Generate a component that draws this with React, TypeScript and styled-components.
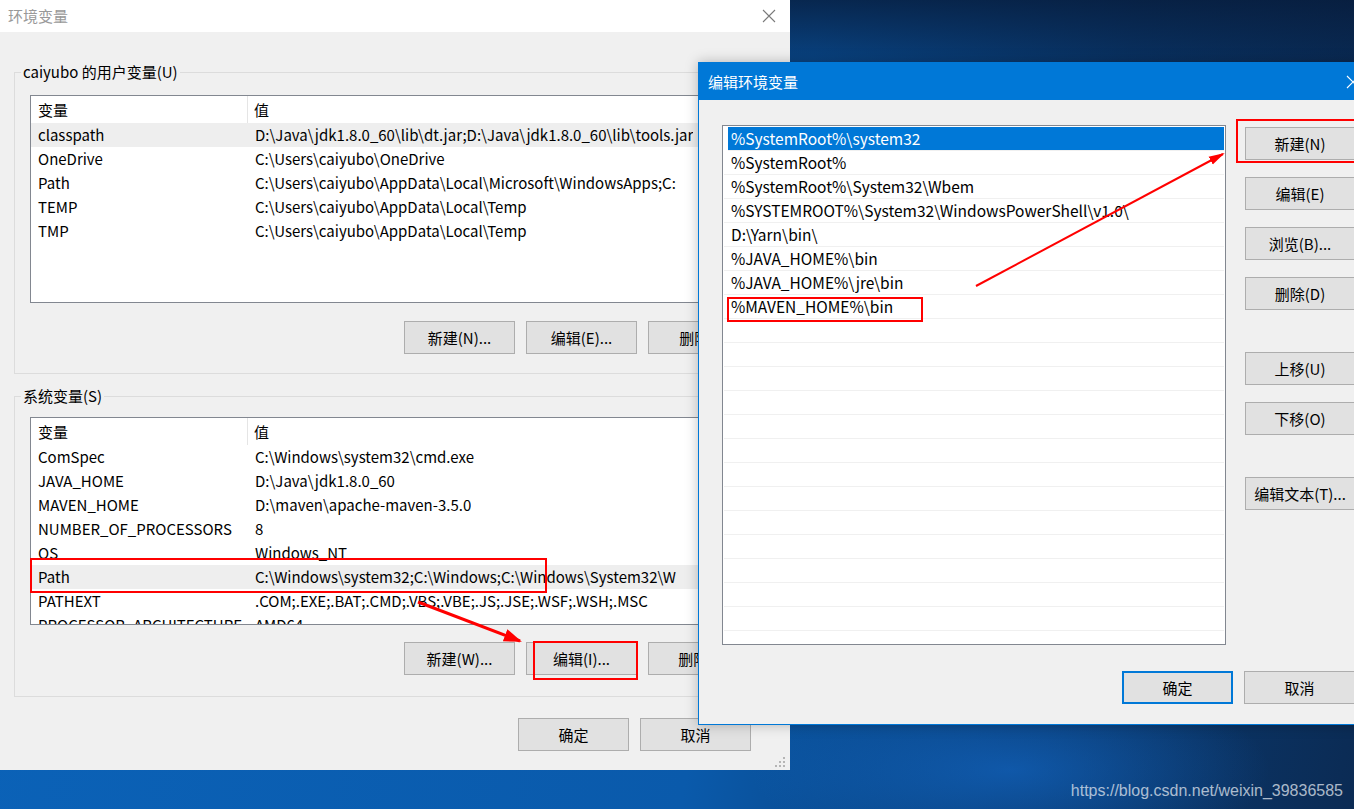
import React from 'react';
import styled, {createGlobalStyle} from 'styled-components';

const GlobalStyle = createGlobalStyle`
  html, body {
    margin: 0;
    padding: 0;
  }
  body {
    width: 1354px;
    height: 809px;
    overflow: hidden;
    font-family: "Noto Sans CJK SC", "Noto Sans", sans-serif;
    color: #000;
  }
`;

const userVars = [
  ['classpath', String.raw`D:\Java\jdk1.8.0_60\lib\dt.jar;D:\Java\jdk1.8.0_60\lib\tools.jar`],
  ['OneDrive', String.raw`C:\Users\caiyubo\OneDrive`],
  ['Path', String.raw`C:\Users\caiyubo\AppData\Local\Microsoft\WindowsApps;C:`],
  ['TEMP', String.raw`C:\Users\caiyubo\AppData\Local\Temp`],
  ['TMP', String.raw`C:\Users\caiyubo\AppData\Local\Temp`],
];

const systemVars = [
  ['ComSpec', String.raw`C:\Windows\system32\cmd.exe`],
  ['JAVA_HOME', String.raw`D:\Java\jdk1.8.0_60`],
  ['MAVEN_HOME', String.raw`D:\maven\apache-maven-3.5.0`],
  ['NUMBER_OF_PROCESSORS', '8'],
  ['OS', 'Windows_NT'],
  ['Path', String.raw`C:\Windows\system32;C:\Windows;C:\Windows\System32\W`],
  ['PATHEXT', '.COM;.EXE;.BAT;.CMD;.VBS;.VBE;.JS;.JSE;.WSF;.WSH;.MSC'],
  ['PROCESSOR_ARCHITECTURE', 'AMD64'],
];

const pathItems = [
  String.raw`%SystemRoot%\system32`,
  String.raw`%SystemRoot%`,
  String.raw`%SystemRoot%\System32\Wbem`,
  String.raw`%SYSTEMROOT%\System32\WindowsPowerShell\v1.0\ `.trim(),
  String.raw`D:\Yarn\bin\ `.trim(),
  String.raw`%JAVA_HOME%\bin`,
  String.raw`%JAVA_HOME%\jre\bin`,
  String.raw`%MAVEN_HOME%\bin`,
];

const CloseIcon = ({color}: {color: string}) => (
  <svg width="14" height="14" viewBox="0 0 14 14">
    <path d="M1 1 L13 13 M13 1 L1 13" stroke={color} strokeWidth="1.1" fill="none" />
  </svg>
);

const GripIcon = () => (
  <svg width="10" height="10" viewBox="0 0 10 10">
    <rect x="8" y="0" width="2" height="2" fill="#b5b5b5" />
    <rect x="4" y="4" width="2" height="2" fill="#b5b5b5" />
    <rect x="8" y="4" width="2" height="2" fill="#b5b5b5" />
    <rect x="0" y="8" width="2" height="2" fill="#b5b5b5" />
    <rect x="4" y="8" width="2" height="2" fill="#b5b5b5" />
    <rect x="8" y="8" width="2" height="2" fill="#b5b5b5" />
  </svg>
);

export default function App() {
  const emptyRows = Array.from({length: 14});

  return (
    <>
      <GlobalStyle />
      <Desktop>
        <EnvWindow>
          <TitleBar $active={false}>
            <TitleText>环境变量</TitleText>
            <CloseBox $height={32}>
              <CloseIcon color="#7a7a7a" />
            </CloseBox>
          </TitleBar>
          <EnvBody>
            <GroupBox $top={40} $padTop={22} $listGap={18} $padBottom={19}>
              <GroupLabel>caiyubo 的用户变量(U)</GroupLabel>
              <VarList>
                <HeaderRow>
                  <HeaderName>变量</HeaderName>
                  <HeaderValue>值</HeaderValue>
                </HeaderRow>
                {userVars.map(([name, value], i) => (
                  <VarRow key={name} $selected={i === 0}>
                    <NameCell>{name}</NameCell>
                    <ValueCell>{value}</ValueCell>
                  </VarRow>
                ))}
              </VarList>
              <ButtonRow>
                <DlgButton>新建(N)...</DlgButton>
                <DlgButton>编辑(E)...</DlgButton>
                <DlgButton>删除(L)</DlgButton>
              </ButtonRow>
            </GroupBox>

            <GroupBox $top={22} $padTop={20} $listGap={17} $padBottom={21}>
              <GroupLabel>系统变量(S)</GroupLabel>
              <VarList>
                <HeaderRow>
                  <HeaderName>变量</HeaderName>
                  <HeaderValue>值</HeaderValue>
                </HeaderRow>
                {systemVars.map(([name, value]) => (
                  <VarRow key={name} $selected={name === 'Path'}>
                    <NameCell>{name}</NameCell>
                    <ValueCell>{value}</ValueCell>
                  </VarRow>
                ))}
              </VarList>
              <ButtonRow>
                <DlgButton>新建(W)...</DlgButton>
                <DlgButton>编辑(I)...</DlgButton>
                <DlgButton>删除(D)</DlgButton>
              </ButtonRow>
            </GroupBox>

            <FooterRow>
              <DlgButton>确定</DlgButton>
              <DlgButton>取消</DlgButton>
            </FooterRow>
          </EnvBody>
          <Grip>
            <GripIcon />
          </Grip>
        </EnvWindow>

        <EditWindow>
          <TitleBar $active>
            <TitleText>编辑环境变量</TitleText>
            <CloseBox $height={37}>
              <CloseIcon color="#ffffff" />
            </CloseBox>
          </TitleBar>
          <EditBody>
            <EditMain>
              <PathList>
                {pathItems.map((item, i) => (
                  <PathRow key={item} $selected={i === 0}>
                    {item}
                  </PathRow>
                ))}
                {emptyRows.map((_, i) => (
                  <PathRow key={`empty-${i}`} />
                ))}
              </PathList>
              <SideButtons>
                <SideButton>新建(N)</SideButton>
                <SideButton>编辑(E)</SideButton>
                <SideButton>浏览(B)...</SideButton>
                <SideButton>删除(D)</SideButton>
                <SideButton $spaced>上移(U)</SideButton>
                <SideButton>下移(O)</SideButton>
                <SideButton $spaced>编辑文本(T)...</SideButton>
              </SideButtons>
            </EditMain>
            <EditFooter>
              <DlgButton $default>确定</DlgButton>
              <DlgButton>取消</DlgButton>
            </EditFooter>
          </EditBody>
        </EditWindow>

        <Annotations width="1354" height="809" viewBox="0 0 1354 809">
          <defs>
            <marker
              id="headThin"
              markerUnits="userSpaceOnUse"
              markerWidth="16"
              markerHeight="12"
              refX="14"
              refY="6"
              orient="auto">
              <path d="M0 1.5 L16 6 L0 10.5 Z" fill="#ff0000" />
            </marker>
            <marker
              id="headBold"
              markerUnits="userSpaceOnUse"
              markerWidth="18"
              markerHeight="14"
              refX="16"
              refY="7"
              orient="auto">
              <path d="M0 0.5 L18 7 L0 13.5 Z" fill="#ff0000" />
            </marker>
          </defs>
          <rect x="31" y="559" width="515" height="33" fill="none" stroke="#ff0000" strokeWidth="2" />
          <rect x="534" y="642" width="103" height="37" fill="none" stroke="#ff0000" strokeWidth="2" />
          <rect x="728" y="298" width="194" height="23" fill="none" stroke="#ff0000" strokeWidth="2" />
          <rect x="1237" y="120" width="120" height="42" fill="none" stroke="#ff0000" strokeWidth="2" />
          <line x1="976" y1="286" x2="1223" y2="154" stroke="#ff0000" strokeWidth="2" markerEnd="url(#headThin)" />
          <line x1="418" y1="602" x2="520" y2="641" stroke="#ff0000" strokeWidth="3" markerEnd="url(#headBold)" />
        </Annotations>

        <Watermark>https://blog.csdn.net/weixin_39836585</Watermark>
      </Desktop>
    </>
  );
}

const Desktop = styled.div`
  position: relative;
  width: 1354px;
  height: 809px;
  overflow: hidden;
  background:
    linear-gradient(to bottom, rgba(7, 26, 56, 0.8) 0%, rgba(7, 26, 56, 0) 14%),
    radial-gradient(ellipse 260px 90px at 1010px 770px, rgba(20, 110, 210, 0.55), rgba(20, 110, 210, 0)),
    linear-gradient(100deg, #0b63b9 0%, #0a5aab 55%, #0a3e78 76%, #0b2b54 100%);
`;

const EnvWindow = styled.div`
  position: absolute;
  left: 0;
  top: 0;
  width: 790px;
  height: 770px;
  display: flex;
  flex-direction: column;
  background: #f0f0f0;
  box-sizing: border-box;
`;

const EditWindow = styled.div`
  position: absolute;
  left: 698px;
  top: 62px;
  width: 677px;
  height: 663px;
  display: flex;
  flex-direction: column;
  background: #f0f0f0;
  border: 1px solid #0078d7;
  box-sizing: border-box;
  box-shadow: 0 0 12px rgba(0, 0, 0, 0.25);
`;

const TitleBar = styled.div<{$active?: boolean}>`
  display: flex;
  align-items: center;
  justify-content: space-between;
  flex-shrink: 0;
  height: ${p => (p.$active ? '37px' : '32px')};
  padding-left: ${p => (p.$active ? '9px' : '8px')};
  background: ${p => (p.$active ? '#0078d7' : '#ffffff')};
  color: ${p => (p.$active ? '#ffffff' : '#999999')};
`;

const TitleText = styled.div`
  font-size: 15px;
  line-height: 20px;
`;

const CloseBox = styled.div<{$height: number}>`
  width: 42px;
  height: ${p => p.$height}px;
  display: flex;
  align-items: center;
  justify-content: center;
`;

const EnvBody = styled.div`
  display: flex;
  flex-direction: column;
  padding: 0 14px 19px 14px;
`;

const GroupBox = styled.div<{
  $top: number;
  $padTop: number;
  $listGap: number;
  $padBottom: number;
}>`
  position: relative;
  display: flex;
  flex-direction: column;
  margin-top: ${p => p.$top}px;
  padding: ${p => p.$padTop}px 15px ${p => p.$padBottom}px 15px;
  border: 1px solid #dcdcdc;

  & > div:last-child {
    margin-top: ${p => p.$listGap}px;
  }
`;

const GroupLabel = styled.span`
  position: absolute;
  top: -11px;
  left: 6px;
  padding: 0 2px;
  background: #f0f0f0;
  font-size: 15px;
  line-height: 20px;
`;

const VarList = styled.div`
  height: 208px;
  box-sizing: border-box;
  background: #ffffff;
  border: 1px solid #828790;
  overflow: hidden;
  font-size: 15px;
`;

const HeaderRow = styled.div`
  display: flex;
  height: 27px;
  align-items: stretch;
`;

const HeaderName = styled.div`
  width: 217px;
  box-sizing: border-box;
  padding-left: 7px;
  line-height: 27px;
  border-right: 1px solid #e5e5e5;
`;

const HeaderValue = styled.div`
  padding-left: 6px;
  line-height: 27px;
`;

const VarRow = styled.div<{$selected?: boolean}>`
  display: flex;
  height: 24px;
  line-height: 24px;
  background: ${p => (p.$selected ? '#eeeeee' : 'transparent')};
  white-space: nowrap;
`;

const NameCell = styled.div`
  width: 217px;
  flex-shrink: 0;
  box-sizing: border-box;
  padding-left: 7px;
  overflow: hidden;
`;

const ValueCell = styled.div`
  padding-left: 7px;
  overflow: hidden;
`;

const ButtonRow = styled.div`
  display: flex;
  justify-content: flex-end;
  gap: 11px;
  padding-right: 1px;
`;

const DlgButton = styled.div<{$default?: boolean}>`
  width: 111px;
  height: 33px;
  box-sizing: border-box;
  display: flex;
  align-items: center;
  justify-content: center;
  background: #e1e1e1;
  border: ${p => (p.$default ? '2px solid #0078d7' : '1px solid #adadad')};
  font-size: 15px;
  white-space: nowrap;
`;

const FooterRow = styled.div`
  display: flex;
  justify-content: flex-end;
  gap: 11px;
  margin-top: 21px;
  padding-right: 25px;
`;

const Grip = styled.div`
  position: absolute;
  right: 5px;
  bottom: 3px;
  display: flex;
`;

const EditBody = styled.div`
  display: flex;
  flex-direction: column;
  padding: 25px 19px 0 23px;
`;

const EditMain = styled.div`
  display: flex;
  gap: 19px;
`;

const PathList = styled.div`
  width: 504px;
  height: 520px;
  box-sizing: border-box;
  padding: 1px;
  background: #ffffff;
  border: 1px solid #828790;
  overflow: hidden;
  font-size: 15.5px;
`;

const PathRow = styled.div<{$selected?: boolean}>`
  height: 24px;
  box-sizing: border-box;
  line-height: 23px;
  border-bottom: 1px solid #f0f0f0;
  white-space: nowrap;
  background: ${p => (p.$selected ? '#0078d7' : 'transparent')};
  color: ${p => (p.$selected ? '#ffffff' : '#000000')};
  margin-left: ${p => (p.$selected ? '4px' : '0')};
  padding-left: ${p => (p.$selected ? '3px' : '7px')};
`;

const SideButtons = styled.div`
  display: flex;
  flex-direction: column;
  gap: 17px;
  padding-top: 2px;
`;

const SideButton = styled(DlgButton)<{$spaced?: boolean}>`
  width: 110px;
  margin-top: ${p => (p.$spaced ? '25px' : '0')};
`;

const EditFooter = styled.div`
  display: flex;
  justify-content: flex-end;
  gap: 11px;
  margin-top: 26px;
`;

const Annotations = styled.svg`
  position: absolute;
  left: 0;
  top: 0;
  pointer-events: none;
`;

const Watermark = styled.div`
  position: absolute;
  right: 11px;
  bottom: 8px;
  font-family: "Liberation Sans", Arial, sans-serif;
  font-size: 16px;
  line-height: 20px;
  color: rgba(225, 232, 240, 0.75);
`;
